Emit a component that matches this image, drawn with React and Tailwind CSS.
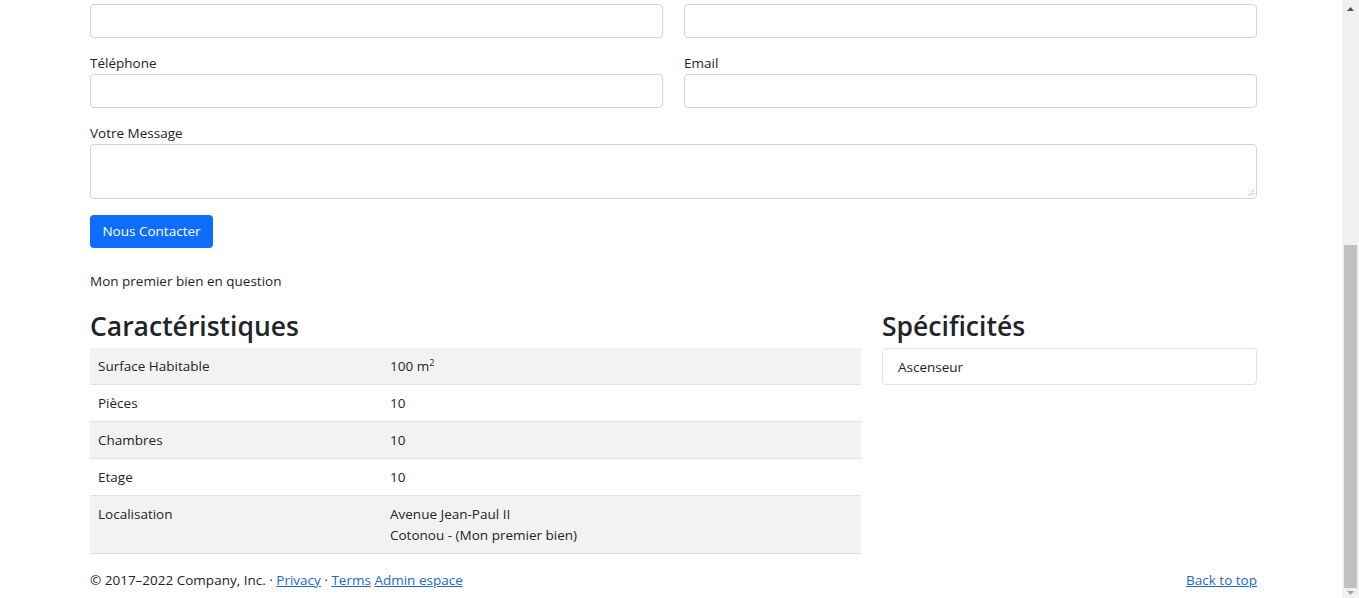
import React from "react";

const font = { fontFamily: '"Open Sans", "Noto Sans", "Liberation Sans", sans-serif' };

function Field({ label, className = "" }) {
  return (
    <div className={"flex flex-col " + className}>
      <label className="h-[22px] leading-[23px] text-[13.5px] text-[#212529]">{label}</label>
      <div className="h-[34px] rounded-[4px] border border-[#ced4da] bg-white" />
    </div>
  );
}

const rows = [
  ["Surface Habitable", <span>100 m<sup className="text-[9px]">2</sup></span>],
  ["Pièces", "10"],
  ["Chambres", "10"],
  ["Etage", "10"],
  ["Localisation", <span>Avenue Jean-Paul II<br />Cotonou - (Mon premier bien)</span>],
];

export default function App() {
  return (
    <div className="flex h-[598px] w-[1359px] overflow-hidden bg-white text-[13.5px] text-[#212529]" style={font}>
      <div className="flex-1 overflow-hidden">
        <div className="ml-[90px] mt-[-18px] w-[1167px]">
          <div className="grid grid-cols-2 gap-x-[21px] gap-y-[14px]">
            <Field label="Adresse" />
            <Field label="Nom" />
            <Field label="Téléphone" />
            <Field label="Email" />
          </div>
          <div className="mt-[14px] flex flex-col">
            <label className="h-[22px] leading-[23px]">Votre Message</label>
            <div className="relative h-[55px] rounded-[4px] border border-[#ced4da] bg-white">
              <svg className="absolute bottom-[1px] right-[1px]" width="9" height="9" viewBox="0 0 9 9">
                <path d="M8 2 L2 8 M8 5 L5 8" stroke="#888" strokeWidth="1" strokeDasharray="1 1" />
              </svg>
            </div>
          </div>
          <button className="mt-[16px] h-[33px] w-[123px] rounded-[4px] bg-[#0d6efd] text-[13.5px] text-white">
            Nous Contacter
          </button>
          <p className="mt-[23px] h-[21px] leading-[21px]">Mon premier bien en question</p>
          <div className="mt-[20px] flex gap-[21px]">
            <div className="w-[771px]">
              <h3 className="h-[29px] text-[26.5px] font-semibold leading-[29px]">Caractéristiques</h3>
              <table className="mt-[7px] w-full border-collapse">
                <tbody>
                  {rows.map(([k, v], i) => (
                    <tr key={k} className={"border-b border-[#dee2e6] " + (i % 2 === 0 ? "bg-[#f2f2f2]" : "bg-white")}>
                      <td className="w-[292px] px-[8px] py-[7.5px] align-top leading-[21px]">{k}</td>
                      <td className="px-[8px] py-[7.5px] align-top leading-[21px]">{v}</td>
                    </tr>
                  ))}
                </tbody>
              </table>
            </div>
            <div className="w-[375px]">
              <h3 className="h-[29px] text-[26.5px] font-semibold leading-[29px]">Spécificités</h3>
              <div className="mt-[7px] h-[37px] rounded-[4px] border border-[#dee2e6] px-[15px] leading-[36px]">
                Ascenseur
              </div>
            </div>
          </div>
          <div className="mt-[16px] flex h-[21px] items-center justify-between leading-[21px]">
            <p>
              © 2017–2022 Company, Inc. · <a className="text-[#2468c9] underline" href="#">Privacy</a> ·{" "}
              <a className="text-[#2468c9] underline" href="#">Terms</a>{" "}
              <a className="text-[#2468c9] underline" href="#">Admin espace</a>
            </p>
            <a className="text-[#2468c9] underline" href="#">Back to top</a>
          </div>
        </div>
      </div>
      <div className="flex w-[17px] flex-col bg-[#f1f1f1]">
        <div className="flex h-[17px] items-center justify-center">
          <svg width="7" height="4" viewBox="0 0 7 4"><path d="M0 4 L3.5 0 L7 4Z" fill="#505050" /></svg>
        </div>
        <div className="h-[228px]" />
        <div className="mx-[2px] h-[343px] bg-[#c1c1c1]" />
        <div className="flex flex-1 items-center justify-center">
          <svg width="7" height="4" viewBox="0 0 7 4"><path d="M0 0 L3.5 4 L7 0Z" fill="#a3a3a3" /></svg>
        </div>
      </div>
    </div>
  );
}
